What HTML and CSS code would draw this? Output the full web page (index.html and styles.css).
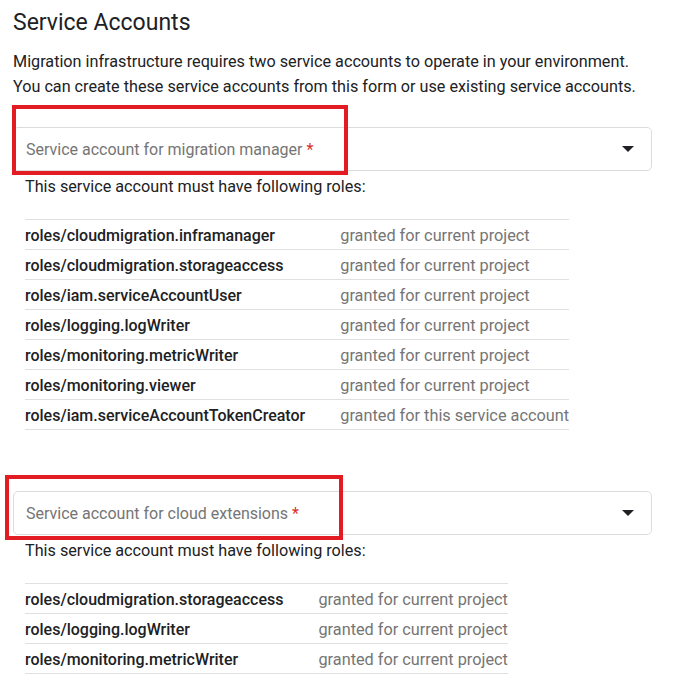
FILE: index.html
```html
<!DOCTYPE html>
<html lang="en">
<head>
	<meta charset="UTF-8">
	<title>Service Accounts</title>
	<link rel="stylesheet" href="styles.css">
</head>
<body>
<div class="page">
	<h2 class="title">Service Accounts</h2>
	<p class="intro">Migration infrastructure requires two service accounts to operate in your environment.<br>You can create these service accounts from this form or use existing service accounts.</p>

	<div class="account first">
		<div class="select">
			<span class="label">Service account for migration manager <em>*</em></span>
			<svg class="arrow" width="12" height="6" viewBox="0 0 12 6"><polygon points="0,0 12,0 6,6" fill="#202124"/></svg>
		</div>
		<p class="hint">This service account must have following roles:</p>
		<table class="roles">
			<tr><td>roles/cloudmigration.inframanager</td><td>granted for current project</td></tr>
			<tr><td>roles/cloudmigration.storageaccess</td><td>granted for current project</td></tr>
			<tr><td>roles/iam.serviceAccountUser</td><td>granted for current project</td></tr>
			<tr><td>roles/logging.logWriter</td><td>granted for current project</td></tr>
			<tr><td>roles/monitoring.metricWriter</td><td>granted for current project</td></tr>
			<tr><td>roles/monitoring.viewer</td><td>granted for current project</td></tr>
			<tr><td>roles/iam.serviceAccountTokenCreator</td><td>granted for this service account</td></tr>
		</table>
	</div>

	<div class="account second">
		<div class="select">
			<span class="label">Service account for cloud extensions <em>*</em></span>
			<svg class="arrow" width="12" height="6" viewBox="0 0 12 6"><polygon points="0,0 12,0 6,6" fill="#202124"/></svg>
		</div>
		<p class="hint">This service account must have following roles:</p>
		<table class="roles">
			<tr><td>roles/cloudmigration.storageaccess</td><td>granted for current project</td></tr>
			<tr><td>roles/logging.logWriter</td><td>granted for current project</td></tr>
			<tr><td>roles/monitoring.metricWriter</td><td>granted for current project</td></tr>
		</table>
	</div>

	<div class="mark mark1"></div>
	<div class="mark mark2"></div>
</div>
</body>
</html>
```

FILE: styles.css
```css
*{
	padding: 0;
	margin: 0;
	box-sizing: border-box;
}
body{
	background: #fff;
	font-family: Roboto, "Liberation Sans", sans-serif;
	color: #202124;
}
.page{
	position: relative;
	padding: 8px 23px 0 13px;
}
.title{
	font-size: 23px;
	font-weight: 400;
	line-height: 29px;
}
.intro{
	margin-top: 12px;
	font-size: 16.2px;
	line-height: 25px;
	color: #202124;
}
.account.first{
	margin-top: 28px;
}
.account.second{
	margin-top: 61px;
}
.select{
	height: 44px;
	border: 1px solid #dadce0;
	border-radius: 5px;
	display: flex;
	align-items: center;
	justify-content: space-between;
	padding: 0 17px 0 12px;
}
.label{
	font-size: 16px;
	color: #757575;
}
.label em{
	font-style: normal;
	color: #d93025;
}
.hint{
	margin-top: 6px;
	padding-left: 12px;
	font-size: 16.2px;
	line-height: 20px;
}
.roles{
	margin: 22px 0 0 12px;
	border-collapse: collapse;
	border-top: 1px solid #e0e0e0;
	font-size: 16px;
}
.roles td{
	height: 30px;
	border-bottom: 1px solid #e0e0e0;
	white-space: nowrap;
	padding: 1px 0 0;
}
.roles td:first-child{
	font-weight: 500;
	padding-right: 35px;
}
.roles td:last-child{
	font-size: 16.3px;
	color: #757575;
}
/* red annotation frames */
.mark{
	position: absolute;
	border: 4px solid #e31b23;
}
.mark1{
	left: 12px;
	top: 105px;
	width: 336px;
	height: 70px;
}
.mark2{
	left: 5px;
	top: 475px;
	width: 338px;
	height: 65px;
}
```
